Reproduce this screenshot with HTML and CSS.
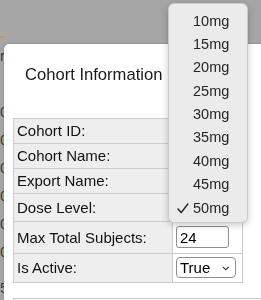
FILE: index.html
```html
<!DOCTYPE html>
<html lang="en">
<head>
<meta charset="utf-8">
<title>Cohort Information</title>
<link rel="stylesheet" href="styles.css">
</head>
<body>
<div class="page">
  <div class="page-col">
    <span class="page-rule"></span>
    <span class="page-line first">r</span>
    <span class="page-line gap">0</span>
    <span class="page-line">0</span>
    <span class="page-line">0</span>
    <span class="page-line">0</span>
    <span class="page-line">0</span>
    <span class="page-line">0</span>
    <span class="page-line last">5</span>
  </div>
</div>

<div class="modal">
  <h2 class="modal-title">Cohort Information</h2>
  <table class="info">
    <tr class="row-25"><td class="label">Cohort ID:</td><td class="value"></td></tr>
    <tr class="row-25"><td class="label">Cohort Name:</td><td class="value"></td></tr>
    <tr class="row-25"><td class="label">Export Name:</td><td class="value"></td></tr>
    <tr class="row-28"><td class="label">Dose Level:</td><td class="value"></td></tr>
    <tr class="row-32"><td class="label">Max Total Subjects:</td><td class="value"><input class="field" type="text" value="24"></td></tr>
    <tr class="row-29"><td class="label">Is Active:</td><td class="value">
      <span class="select">
        <select class="select-native"><option>True</option><option>False</option></select>
        <svg class="chevron" width="8" height="5" viewBox="0 0 8 5"><path d="M0.8 0.8 L4 3.8 L7.2 0.8" fill="none" stroke="#333" stroke-width="1.1"/></svg>
      </span>
    </td></tr>
  </table>
  <div class="next-box"></div>
</div>

<div class="menu" role="listbox">
  <div class="menu-item"><span class="check"></span>10mg</div>
  <div class="menu-item"><span class="check"></span>15mg</div>
  <div class="menu-item"><span class="check"></span>20mg</div>
  <div class="menu-item"><span class="check"></span>25mg</div>
  <div class="menu-item"><span class="check"></span>30mg</div>
  <div class="menu-item"><span class="check"></span>35mg</div>
  <div class="menu-item"><span class="check"></span>40mg</div>
  <div class="menu-item"><span class="check"></span>45mg</div>
  <div class="menu-item selected"><span class="check"><svg width="12" height="11" viewBox="0 0 12 11"><path d="M1 6 L4.2 9.6 L10.8 1" fill="none" stroke="#262626" stroke-width="1.5" stroke-linecap="round" stroke-linejoin="round"/></svg></span>50mg</div>
</div>
</body>
</html>
```

FILE: styles.css
```css
html, body {
  margin: 0;
  padding: 0;
  height: 100%;
  overflow: hidden;
}

body {
  background: #a6a6a6;
  font-family: "Liberation Sans", Arial, sans-serif;
  color: #111;
}

.page {
  width: 4px;
  height: 300px;
  overflow: hidden;
}

.page-col {
  direction: rtl;
  display: flex;
  flex-direction: column;
  align-items: flex-end;
  width: 4px;
  padding-top: 36px;
  font-size: 15px;
  color: #3d3d3d;
}

.page-rule {
  display: block;
  width: 4px;
  height: 2px;
  background: #c9935a;
}

.page-line {
  display: block;
  height: 28px;
  line-height: 28px;
  margin-right: -6px;
}

.page-line.first {
  margin-top: 4px;
  margin-right: -3px;
}

.page-line.gap {
  margin-top: 28px;
}

.page-line.last {
  margin-top: 8px;
}

.modal {
  position: fixed;
  left: 4px;
  top: 44px;
  width: 300px;
  height: 300px;
  box-sizing: border-box;
  background: #fff;
  border-radius: 5px 0 0 0;
  box-shadow: 0 0 2px rgba(0, 0, 0, 0.35);
  padding: 20.7px 0 0 9px;
}

.modal-title {
  margin: 0 0 33px 12px;
  font-size: 16.6px;
  font-weight: normal;
  line-height: normal;
  color: #1a1a1a;
}

.info {
  border-collapse: collapse;
  width: 230px;
  font-size: 15px;
}

.info td {
  border: 1px solid #cbcbcb;
  padding: 0 3px;
  vertical-align: middle;
}

.label {
  width: 152px;
  background: #eeeeee;
  color: #111;
}

.value {
  background: #fff;
}

.row-25 { height: 25px; }
.row-28 { height: 28px; }
.row-32 { height: 32px; }
.row-29 { height: 29px; }

.field {
  display: block;
  box-sizing: border-box;
  width: 53px;
  height: 22px;
  margin: 0;
  padding: 0 3px;
  border: 1px solid #8e8e8e;
  border-radius: 3px;
  font-family: "Liberation Sans", Arial, sans-serif;
  font-size: 15px;
  color: #000;
  background: #fff;
}

.select {
  display: flex;
  align-items: center;
  box-sizing: border-box;
  width: 60px;
  height: 21px;
  padding: 0 5px 0 3px;
  border: 1px solid #8e8e8e;
  border-radius: 4px;
  background: #fff;
}

.select-native {
  appearance: none;
  -webkit-appearance: none;
  border: none;
  background: transparent;
  padding: 0;
  margin: 0;
  width: 42px;
  font-family: "Liberation Sans", Arial, sans-serif;
  font-size: 15px;
  color: #000;
  outline: none;
}

.chevron {
  display: block;
  margin-left: 2px;
  margin-top: 1px;
}

.next-box {
  margin-top: 15px;
  width: 300px;
  height: 40px;
  border: 1px solid #cbcbcb;
}

.menu {
  position: fixed;
  left: 168px;
  top: 3px;
  width: 80px;
  height: 220px;
  box-sizing: border-box;
  padding-top: 5.5px;
  background: #ebebeb;
  border: 1px solid rgba(0, 0, 0, 0.13);
  border-radius: 6px;
  box-shadow: 0 2px 7px rgba(0, 0, 0, 0.22);
  font-family: "Liberation Sans", Arial, sans-serif;
  font-size: 14.5px;
  color: #262626;
}

.menu-item {
  display: flex;
  align-items: center;
  height: 23.4px;
  line-height: 23.4px;
}

.check {
  display: flex;
  justify-content: flex-end;
  align-items: center;
  width: 24px;
  padding-right: 4px;
  box-sizing: border-box;
}
```
